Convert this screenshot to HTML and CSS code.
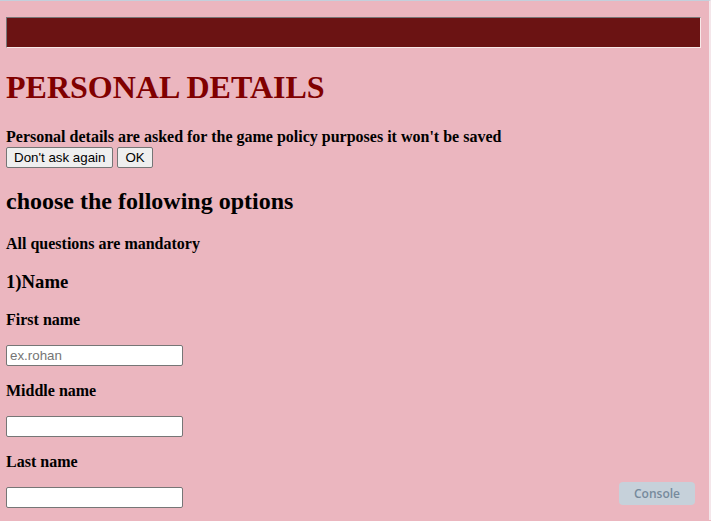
FILE: index.html
```html
<!DOCTYPE html>
<html>
<head>
<meta charset="utf-8">
<title>Personal details</title>
<link rel="stylesheet" href="styles.css">
</head>
<body>
<div class="page">
  <hr class="banner">
  <h1 class="title">PERSONAL DETAILS</h1>
  <b class="notice">Personal details are asked for the game policy purposes it won't be saved</b><br>
  <button class="btn">Don't ask again</button>
  <button class="btn">OK</button>
  <h2>choose the following options</h2>
  <h4>All questions are mandatory</h4>
  <h3>1)Name</h3>
  <h4>First name</h4>
  <input class="field" type="text" placeholder="ex.rohan">
  <h4>Middle name</h4>
  <input class="field" type="text">
  <h4>Last name</h4>
  <input class="field" type="text">
</div>
<button class="console">Console</button>
</body>
</html>
```

FILE: styles.css
```css
html {
  background: #ebb6bf;
}
body {
  margin: 0;
  font-family: "Liberation Serif", "Times New Roman", serif;
  color: #000;
  border-top: 1px solid #c3d0dc;
  border-right: 2px solid #f4e6ea;
  min-height: 520px;
  box-sizing: border-box;
}
.page {
  padding: 8px 8px 0 6px;
}
.banner {
  margin: 8px 0 0 0;
  background: #6b1313;
  border: 1px solid;
  border-color: #777 #f8e8e8 #f8e8e8 #777;
  width: 695px;
  box-sizing: border-box;
  height: 31px;
}
.title {
  color: #800000;
  font-size: 32px;
  margin: 21px 0 22px;
}
.notice {
  font-size: 16px;
}
.btn {
  font-family: "Liberation Sans", Arial, sans-serif;
  font-size: 13.33px;
  padding: 2px 7px;
  margin: 1px 0 0;
  background: #efefef;
  border: 1px solid #767676;
  border-radius: 2px;
  color: #000;
}
h2 {
  font-size: 24px;
  margin: 20px 0;
}
h3 {
  font-size: 18.72px;
  margin: 18px 0;
}
h4 {
  font-size: 16px;
  margin: 16px 0;
}
.field {
  width: 177px;
  height: 21px;
  box-sizing: border-box;
  border: 1px solid #767676;
  border-radius: 2px;
  padding: 1px 3px;
  font-family: "Liberation Sans", Arial, sans-serif;
  font-size: 13.33px;
  background: #fff;
  margin: 0;
  display: block;
}
.field::placeholder {
  color: #757575;
}
.console {
  position: fixed;
  right: 16px;
  bottom: 16px;
  width: 76px;
  height: 23px;
  border: none;
  border-radius: 4px;
  background: #c6d1da;
  color: #768a9c;
  font-family: "Open Sans", "Noto Sans", sans-serif;
  font-weight: 600;
  font-size: 12px;
  padding: 0;
}
```
